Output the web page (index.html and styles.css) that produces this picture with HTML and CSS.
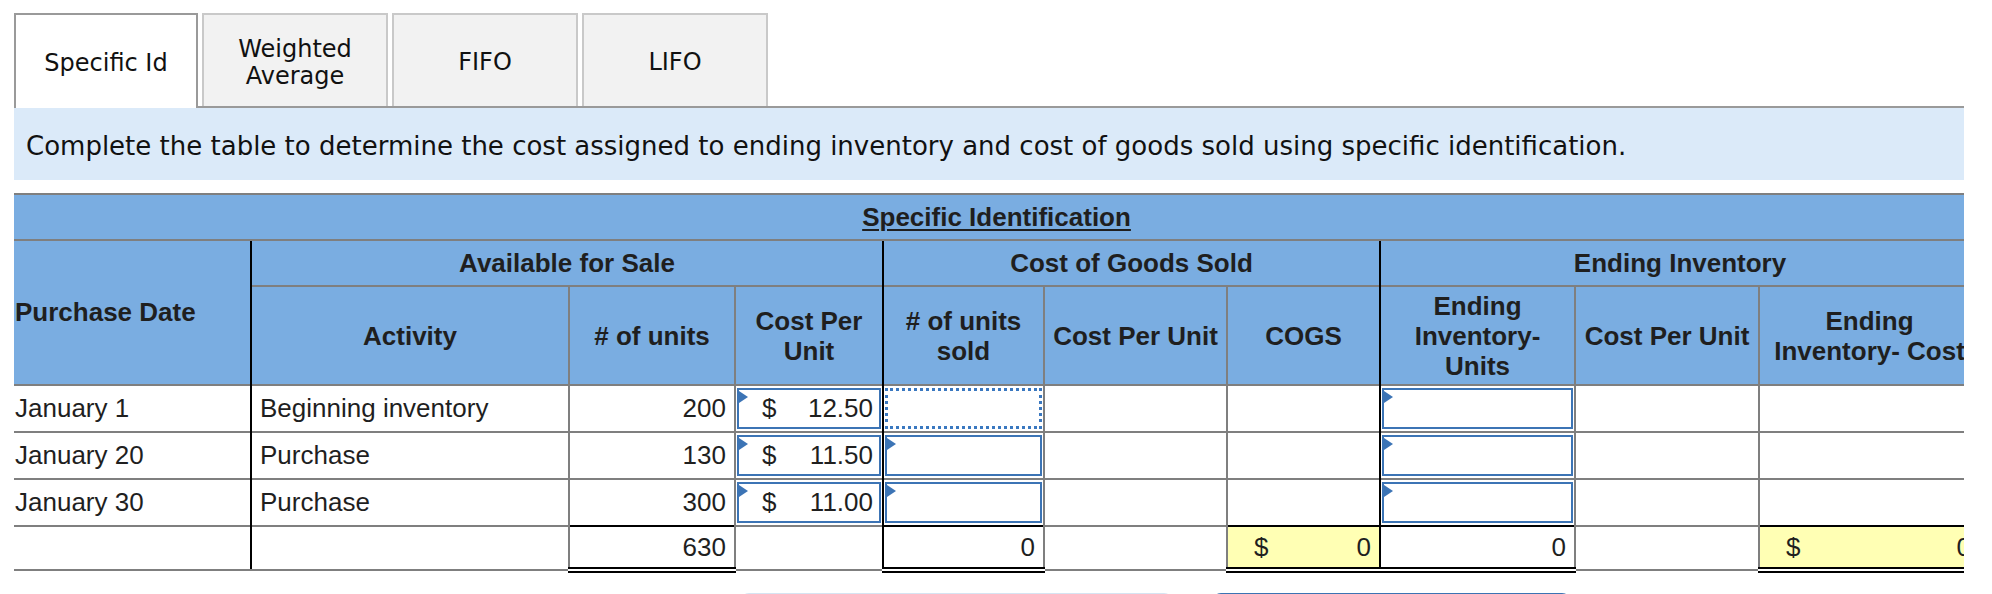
FILE: index.html
```html
<!DOCTYPE html>
<html>
<head>
<meta charset="utf-8">
<title>Specific Identification</title>
<link rel="stylesheet" href="styles.css">
</head>
<body>
<div class="page">
  <div class="tabs">
    <div class="tab active">Specific Id</div>
    <div class="tab">Weighted<br>Average</div>
    <div class="tab">FIFO</div>
    <div class="tab">LIFO</div>
  </div>
  <div class="instr">Complete the table to determine the cost assigned to ending inventory and cost of goods sold using specific identification.</div>
  <div class="clip">
    <table class="grid">
      <colgroup>
        <col class="c1"><col class="c2"><col class="c3"><col class="c4"><col class="c5">
        <col class="c6"><col class="c7"><col class="c8"><col class="c9"><col class="c10">
      </colgroup>
      <thead>
        <tr class="r-title">
          <th colspan="10"><span class="title">Specific Identification</span></th>
        </tr>
        <tr class="r-group">
          <th rowspan="2" class="pd">Purchase Date</th>
          <th colspan="3" class="sep">Available for Sale</th>
          <th colspan="3" class="sep">Cost of Goods Sold</th>
          <th colspan="3" class="sep">Ending Inventory</th>
        </tr>
        <tr class="r-cols">
          <th class="sep">Activity</th>
          <th class="gl"># of units</th>
          <th class="gl">Cost Per<br>Unit</th>
          <th class="sep"># of units<br>sold</th>
          <th class="gl">Cost Per Unit</th>
          <th class="gl">COGS</th>
          <th class="sep">Ending<br>Inventory-<br>Units</th>
          <th class="gl">Cost Per Unit</th>
          <th class="gl">Ending<br>Inventory- Cost</th>
        </tr>
      </thead>
      <tbody>
        <tr>
          <td class="first">January 1</td>
          <td class="sep">Beginning inventory</td>
          <td class="num">200</td>
          <td class="inp"><div class="box"><span class="flag"></span><span>$</span><span>12.50</span></div></td>
          <td class="inp sep"><div class="box dotted"></div></td>
          <td></td>
          <td></td>
          <td class="inp sep"><div class="box"><span class="flag"></span></div></td>
          <td></td>
          <td></td>
        </tr>
        <tr>
          <td class="first">January 20</td>
          <td class="sep">Purchase</td>
          <td class="num">130</td>
          <td class="inp"><div class="box"><span class="flag"></span><span>$</span><span>11.50</span></div></td>
          <td class="inp sep"><div class="box"><span class="flag"></span></div></td>
          <td></td>
          <td></td>
          <td class="inp sep"><div class="box"><span class="flag"></span></div></td>
          <td></td>
          <td></td>
        </tr>
        <tr>
          <td class="first">January 30</td>
          <td class="sep">Purchase</td>
          <td class="num">300</td>
          <td class="inp"><div class="box"><span class="flag"></span><span>$</span><span>11.00</span></div></td>
          <td class="inp sep"><div class="box"><span class="flag"></span></div></td>
          <td></td>
          <td></td>
          <td class="inp sep"><div class="box"><span class="flag"></span></div></td>
          <td></td>
          <td></td>
        </tr>
        <tr class="r-total">
          <td class="first"></td>
          <td class="sep"></td>
          <td class="num tot">630</td>
          <td></td>
          <td class="num tot sep">0</td>
          <td></td>
          <td class="tot yel"><div class="money"><span>$</span><span>0</span></div></td>
          <td class="num tot sep">0</td>
          <td></td>
          <td class="tot yel"><div class="money"><span>$</span><span>0</span></div></td>
        </tr>
      </tbody>
    </table>
  </div>
  <div class="buttons">
    <div class="btn light"></div>
    <div class="btn dark"></div>
  </div>
</div>
</body>
</html>
```

FILE: styles.css
```css
html, body {
  margin: 0;
  padding: 0;
  overflow: hidden;
  background: #ffffff;
}

.page {
  padding: 13px 0 0 14px;
  width: 1950px;
}

/* Tabs */
.tabs {
  display: flex;
  align-items: stretch;
  gap: 4px;
  height: 93px;
  border-bottom: 2px solid #9a9a9a;
}

.tab {
  box-sizing: border-box;
  width: 186px;
  display: flex;
  align-items: center;
  justify-content: center;
  text-align: center;
  font-family: "DejaVu Sans", Verdana, sans-serif;
  font-size: 24px;
  line-height: 27px;
  color: #111111;
  background: #f2f2f2;
  border: 2px solid #c9c9c9;
  border-bottom: none;
  padding-top: 4px;
}

.tab.active {
  width: 184px;
  background: #ffffff;
  border-color: #9a9a9a;
  margin-bottom: -2px;
}

/* Instruction bar */
.instr {
  height: 72px;
  line-height: 76px;
  background: #dbeaf9;
  padding-left: 12px;
  font-family: "DejaVu Sans", Verdana, sans-serif;
  font-size: 26px;
  color: #111111;
  white-space: nowrap;
  overflow: hidden;
}

/* Table */
.clip {
  margin-top: 13px;
  width: 1950px;
  overflow: hidden;
}

.grid {
  table-layout: fixed;
  width: 1965px;
  border-collapse: collapse;
  font-family: "Liberation Sans", Arial, sans-serif;
  font-size: 26px;
  color: #1f1f1f;
}

.c1 { width: 237px; }
.c2 { width: 318px; }
.c3 { width: 166px; }
.c4 { width: 148px; }
.c5 { width: 161px; }
.c6 { width: 183px; }
.c7 { width: 153px; }
.c8 { width: 195px; }
.c9 { width: 184px; }
.c10 { width: 220px; }

.grid th {
  background: #7aade1;
  font-weight: bold;
  line-height: 30px;
  padding: 0 2px;
  white-space: nowrap;
  overflow: hidden;
  border-top: 2px solid #7f7f7f;
  border-left: none;
  border-right: none;
  border-bottom: none;
  vertical-align: middle;
  text-align: center;
}

.grid th.gl {
  border-left: 2px solid #7f7f7f;
}

.grid .sep {
  border-left: 2px solid #000000;
}

.r-title th {
  height: 44px;
}

.title {
  text-decoration: underline;
  text-underline-offset: 3px;
}

.r-group th {
  height: 44px;
}

.r-group th.pd {
  text-align: left;
  padding-left: 1px;
  padding-bottom: 2px;
}

.r-cols th {
  height: 97px;
}

.grid td {
  height: 43px;
  padding: 0 8px;
  border-top: 2px solid #7f7f7f;
  border-left: 2px solid #7f7f7f;
  border-right: none;
  border-bottom: none;
  white-space: nowrap;
  overflow: hidden;
  vertical-align: middle;
}

.grid td.first {
  border-left: none;
  padding-left: 1px;
}

.grid td.sep {
  border-left: 2px solid #000000;
}

.grid td.num {
  text-align: right;
}

.grid td.inp {
  padding: 1px;
  position: relative;
}

.box {
  position: relative;
  box-sizing: border-box;
  height: 41px;
  border: 2px solid #3c74b5;
  display: flex;
  align-items: center;
  justify-content: space-between;
  padding: 0 6px 0 23px;
}

.box.dotted {
  border: 3px dotted #3a78c0;
}

.flag {
  position: absolute;
  left: 0;
  top: 1px;
  width: 0;
  height: 0;
  border-left: 9px solid #3c74b5;
  border-top: 6px solid transparent;
  border-bottom: 6px solid transparent;
}

.r-total td {
  border-bottom: 2px solid #7f7f7f;
  height: 40px;
}

.r-total td.tot {
  border-top: 2px solid #000000;
  border-bottom: 6px double #000000;
}

.r-total td.yel {
  background: #ffffb4;
  padding: 0 8px 0 26px;
}

.money {
  display: flex;
  justify-content: space-between;
}

/* Buttons below */
.buttons {
  display: flex;
  gap: 41px;
  margin-top: 20px;
  padding-left: 727px;
}

.btn {
  height: 50px;
  border-radius: 8px 8px 0 0;
}

.btn.light {
  width: 431px;
  background: #d6e4f2;
}

.btn.dark {
  width: 357px;
  background: #3b73b3;
}
```
